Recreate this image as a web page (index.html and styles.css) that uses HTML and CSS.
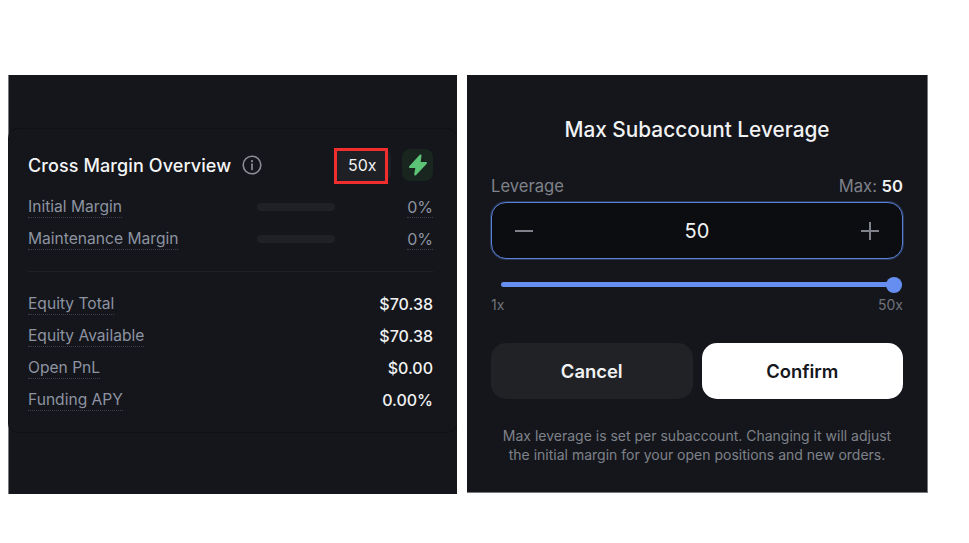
FILE: index.html
```html
<!DOCTYPE html>
<html lang="en">

<head>
    <meta charset="UTF-8">
    <meta name="viewport" content="width=device-width, initial-scale=1.0">
    <title>Max Subaccount Leverage</title>
    <link rel="stylesheet" href="styles.css">
</head>

<body>
    <div class="page">
        <section class="panel panel-left">
            <div class="card">
                <div class="card-head">
                    <h2>Cross Margin Overview</h2>
                    <svg class="info-icon" width="20" height="20" viewBox="0 0 20 20" fill="none">
                        <circle cx="10" cy="10" r="8.8" stroke="#8b8e96" stroke-width="1.6" />
                        <circle cx="10" cy="6.2" r="1.1" fill="#8b8e96" />
                        <path d="M10 9.2v5.2" stroke="#8b8e96" stroke-width="1.7" stroke-linecap="round" />
                    </svg>
                    <div class="lev-btn">
                        <span>50x</span>
                        <div class="red-box"></div>
                    </div>
                    <div class="bolt-btn">
                        <svg width="20" height="22" viewBox="0 0 20 22">
                            <path d="M12.500 1.500 2 13H8.500L7.200 20.500 18 9H11.500Z" fill="#5cc476" stroke="#5cc476" stroke-width="2" stroke-linejoin="round" />
                        </svg>
                    </div>
                </div>

                <div class="row">
                    <span class="label">Initial Margin</span>
                    <div class="bar"></div>
                    <span class="pct">0%</span>
                </div>
                <div class="row">
                    <span class="label">Maintenance Margin</span>
                    <div class="bar"></div>
                    <span class="pct">0%</span>
                </div>

                <div class="divider"></div>

                <div class="row row-value">
                    <span class="label">Equity Total</span>
                    <span class="value">$70.38</span>
                </div>
                <div class="row row-value">
                    <span class="label">Equity Available</span>
                    <span class="value">$70.38</span>
                </div>
                <div class="row row-value">
                    <span class="label">Open PnL</span>
                    <span class="value">$0.00</span>
                </div>
                <div class="row row-value">
                    <span class="label">Funding APY</span>
                    <span class="value">0.00%</span>
                </div>
            </div>
        </section>

        <section class="panel panel-right">
            <h1>Max Subaccount Leverage</h1>

            <div class="lev-head">
                <span>Leverage</span>
                <span>Max: <b>50</b></span>
            </div>

            <div class="stepper">
                <svg width="20" height="20" viewBox="0 0 20 20">
                    <path d="M1 10h18" stroke="#7f828a" stroke-width="2" />
                </svg>
                <span>50</span>
                <svg width="20" height="20" viewBox="0 0 20 20">
                    <path d="M1 10h18M10 1v18" stroke="#7f828a" stroke-width="2" />
                </svg>
            </div>

            <div class="slider">
                <div class="track"></div>
                <div class="thumb"></div>
            </div>

            <div class="scale">
                <span>1x</span>
                <span>50x</span>
            </div>

            <div class="actions">
                <button class="btn btn-cancel">Cancel</button>
                <button class="btn btn-confirm">Confirm</button>
            </div>

            <p class="note">Max leverage is set per subaccount. Changing it will adjust<br>the initial margin for your open positions and new orders.</p>
        </section>
    </div>
</body>

</html>
```

FILE: styles.css
```css
body {
    font-family: Inter, "Liberation Sans", sans-serif;
    margin: 0;
    padding: 0;
    background-color: #fff;
}

.page {
    display: flex;
    align-items: flex-start;
    padding: 75px 0 0 8px;
    gap: 10px;
}

.panel {
    background-color: #14161b;
    box-sizing: border-box;
}

.panel-left {
    width: 449px;
    height: 419px;
    padding-top: 53px;
    border-left: 1px solid #77787b;
}

.panel-right {
    width: 461px;
    height: 418px;
    padding: 42px 24px 0 24px;
    border-right: 1px solid #77787b;
    border-bottom: 1px solid #77787b;
}

/* left card */
.card {
    height: 305px;
    margin-left: -1px;
    box-sizing: border-box;
    padding: 19px 24px 0 20px;
    background-color: #14161b;
    border-top: 1px solid #0f1115;
    border-bottom: 1px solid #0e1013;
    border-radius: 10px;
}

.card-head {
    display: flex;
    align-items: center;
    height: 34px;
    margin-bottom: 9px;
}

.card-head h2 {
    margin: 0;
    font-size: 18px;
    font-weight: 500;
    letter-spacing: 0.1px;
    color: #f4f5f6;
}

.info-icon {
    margin-left: 11px;
}

.lev-btn {
    position: relative;
    margin-left: auto;
    width: 57px;
    height: 32px;
    background-color: #1e2025;
    border-radius: 8px;
    color: #f1f2f3;
    font-size: 16px;
    line-height: 32px;
    padding-left: 14px;
    box-sizing: border-box;
}

.red-box {
    position: absolute;
    left: 0;
    top: -1px;
    width: 54px;
    height: 36px;
    box-sizing: border-box;
    border: 3px solid #f12d2d;
}

.bolt-btn {
    display: flex;
    align-items: center;
    justify-content: center;
    width: 31px;
    height: 32px;
    margin-left: 11px;
    background-color: #18261f;
    border-radius: 8px;
}

.row {
    display: flex;
    align-items: center;
    justify-content: space-between;
    height: 32px;
    font-size: 15.6px;
}

.label {
    color: #8d93a1;
    border-bottom: 1px dotted #3f424a;
    line-height: 20px;
}

.pct {
    color: #8d93a1;
    border-bottom: 1px dotted #3f424a;
    font-size: 16px;
    line-height: 20px;
    margin-left: auto;
}

.value {
    color: #f1f2f3;
    font-size: 16px;
    font-weight: 500;
}

.bar {
    position: absolute;
    left: 257px;
    width: 78px;
    height: 8px;
    background-color: #1f2126;
    border-radius: 4px;
}

.divider {
    height: 1px;
    background-color: #1f2126;
    margin: 16px 0 16px;
}

/* right dialog */
h1 {
    margin: 0;
    height: 26px;
    line-height: 26px;
    text-align: center;
    font-size: 20.8px;
    font-weight: 500;
    color: #f1f2f3;
}

.lev-head {
    display: flex;
    justify-content: space-between;
    margin-top: 33px;
    height: 26px;
    line-height: 20px;
    font-size: 16.6px;
    color: #7f828a;
}

.lev-head b {
    font-weight: 600;
    color: #f1f2f3;
}

.stepper {
    display: flex;
    align-items: center;
    justify-content: space-between;
    height: 57px;
    padding: 0 22px;
    box-sizing: border-box;
    background-color: #0c0d11;
    border: 1px solid #5a80d8;
    box-shadow: 0 0 0 1px rgba(90, 128, 216, 0.3);
    border-radius: 15px;
    font-size: 20px;
    font-weight: 400;
    color: #f1f2f3;
}

.slider {
    position: relative;
    height: 16px;
    margin: 18px 1px 0 10px;
}

.track {
    position: absolute;
    left: 0;
    right: 0;
    top: 5px;
    height: 5px;
    border-radius: 3px;
    background-color: #668ef0;
}

.thumb {
    position: absolute;
    right: 0;
    top: 0;
    width: 16px;
    height: 16px;
    border-radius: 50%;
    background-color: #668ef0;
}

.scale {
    display: flex;
    justify-content: space-between;
    margin-top: 3px;
    font-size: 14px;
    line-height: 17px;
    color: #6f727a;
}

.actions {
    display: flex;
    gap: 9px;
    margin-top: 30px;
}

.btn {
    flex: 1;
    height: 56px;
    border: none;
    border-radius: 15px;
    font-family: inherit;
    font-size: 18.4px;
    font-weight: 600;
    cursor: pointer;
}

.btn-cancel {
    background-color: #202226;
    color: #f1f2f3;
}

.btn-confirm {
    background-color: #fff;
    color: #15171c;
}

.note {
    margin: 27px 0 0;
    text-align: center;
    font-size: 14px;
    line-height: 19px;
    color: #7f828a;
}
```
